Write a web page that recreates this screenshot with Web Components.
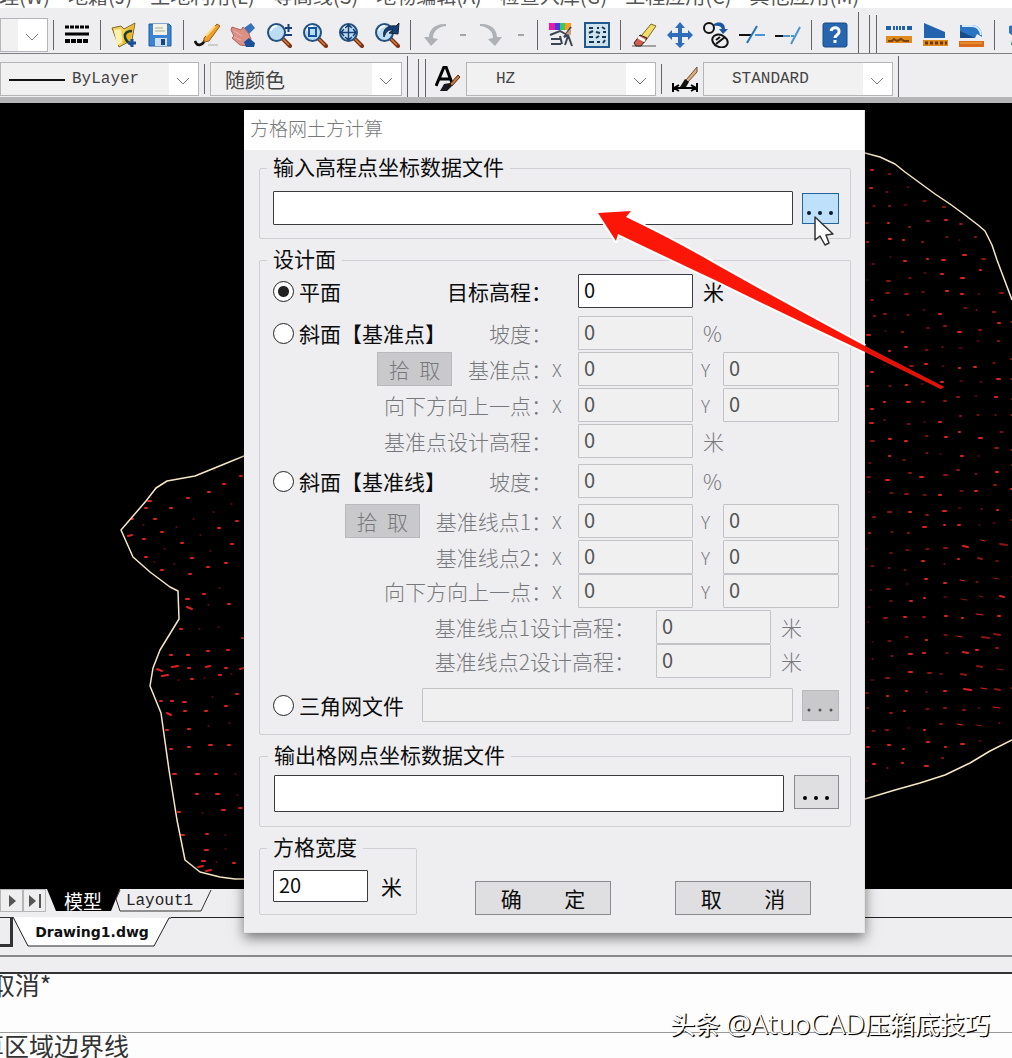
<!DOCTYPE html>
<html lang="zh-CN">
<head>
<meta charset="utf-8">
<title>方格网土方计算</title>
<style>
html,body{margin:0;background:#fdfdfe}
body{font-family:"Noto Sans CJK SC",sans-serif;font-size:20px;color:#111;overflow:hidden}
</style>
</head>
<body>
<cad-app></cad-app>
<script>
const define = (name, html, setup) => customElements.define(name, class extends HTMLElement {
  constructor(){
    super();
    const t = document.createElement('template');
    t.innerHTML = typeof html === 'function' ? html(this) : html;
    this.attachShadow({mode:'open'}).append(t.content.cloneNode(true));
    if (setup) setup(this, this.shadowRoot);
  }
});

const glass = (inner) => `<path d="M16 16l8 8" stroke="#7a3413" stroke-width="4" stroke-linecap="round"/><path d="M16 16l7 7" stroke="#d9783c" stroke-width="1.500"/><circle cx="10.500" cy="10.500" r="8.500" fill="#bcdcf3" stroke="#23507f" stroke-width="2"/><path d="M5 9a6 6 0 0 1 6-5" stroke="#fff" stroke-width="2" fill="none"/>${inner}`;
const ICONS = {
  lines:['线宽','<path d="M1 5h24" stroke="#000" stroke-width="3" stroke-dasharray="4 1"/><path d="M1 12h24" stroke="#000" stroke-width="3"/><path d="M1 19h24" stroke="#000" stroke-width="4" stroke-dasharray="5 1"/>'],
  open:['打开','<path d="M1 6l9-2 3 3 11-6-3 17-13 7z" fill="#f2cf5e" stroke="#7b6a28"/><path d="M3 8l7-1 1 13-5 4z" fill="#fff2b0"/><path d="M14 9l9-7-3 16-8 4z" fill="#eeb728"/><path d="M21 9c-10 0-9 9 0 14" fill="none" stroke="#1b3c34" stroke-width="2.500"/><path d="M17 21h8m-4-4v8" stroke="#1a4f98" stroke-width="3"/>'],
  save:['保存','<path d="M2 2h20l2 2v20H2z" fill="#3d83d4" stroke="#1c5ca8"/><path d="M6 2h14v11H6z" fill="#f5f2e4"/><path d="M8 6h8M8 9h10" stroke="#a9ad9d"/><path d="M8 16h12v8H8z" fill="#cddff0"/><path d="M14 17h4v6h-4z" fill="#15477f"/>'],
  brush:['绘制','<path d="M1 19c2 6 8 5 11-3" fill="none" stroke="#111" stroke-width="2.500"/><path d="M10 16L23 2l3 2-11 15-5 1z" fill="#eca02b" stroke="#9a5d17"/><path d="M12 14l9-10" stroke="#ffdc77" stroke-width="2"/><path d="M14 23h10" stroke="#aaa"/>'],
  hand:['平移','<path d="M14 6l7-5 4 5-6 6z" fill="#3773bd"/><path d="M1 8l1-3 9 3 2-3 6 7 2 5-3 7-8-1-8-7 2-2z" fill="#dc8f84" stroke="#b3645e"/><path d="M4 9l8 5M4 15l7 3" stroke="#f0b5ab"/><path d="M14 20l5-4 6 5-1 4h-8z" fill="#1c4f9b"/>'],
  zoompm:['缩放',glass('<path d="M19 6h7m-3.500-4v8M19 13h7" stroke="#173e79" stroke-width="2"/>')],
  zoomwin:['窗口缩放',glass('<rect x="7" y="6" width="7" height="8" fill="none" stroke="#15539f" stroke-width="2"/>')],
  zoomall:['全部缩放',glass('<path d="M3 10.500h15M10.500 3v15M7 6l3.500-3L14 6M7 15l3.500 3 3.500-3M6 7l-3 3.500L6 14M15 7l3 3.500-3 3.500" fill="none" stroke="#153f76" stroke-width="1.500"/>')],
  zoomprev:['上次缩放',glass('<path d="M10 15c-2-8 4-12 12-11l3-3-1 11-9-1 4-3c-5-1-7 2-9 7z" fill="#173f79" stroke="#123"/>')],
  undo:['放弃','<path d="M25 2C14 1 8 8 8 15H3l7 9 7-7-5-1c0-6 4-11 13-12z" fill="#aeb1b6"/>'],
  redo:['重做','<path d="M1 2c11-1 17 6 17 13h5l-7 9-7-7 5-1C14 10 10 5 1 4z" fill="#aeb1b6"/>'],
  palette:['特性','<path d="M1 1h6v7H1z" fill="#e71ba8"/><path d="M7 1h5v7H7z" fill="#4b39df"/><path d="M12 1h5v7h-5z" fill="#31ca63"/><path d="M17 1h6v7h-6z" fill="#fb9d21"/><path d="M2 13l10-4 9 5M3 17h9M3 22h10M12 14l2 8M23 5l-7 10 4-2 4 11M20 14l-3 9" fill="none" stroke="#3d4553" stroke-width="2"/><path d="M18 12l5-6v7z" fill="#c89b82"/>'],
  grid:['设计中心','<rect x="1" y="1" width="24" height="24" fill="#cfe3ef" stroke="#1e588d" stroke-width="2"/><path d="M5 6h4M13 6h2M18 5l3 2M5 11l4-2M12 10l4 1M19 10h3M5 15h4M12 16l3-2M18 15h4M5 20h5M13 20h3M19 21l2-3" stroke="#16344e" stroke-width="2"/>'],
  erase:['删除','<path d="M1 24h24" stroke="#555"/><path d="M6 19L20 2l5 2L13 21z" fill="#f4dc68" stroke="#776431"/><path d="M3 21l6-8 7 3-6 8H5z" fill="#d65b4b" stroke="#222"/><path d="M7 15l7 4" stroke="#fff" stroke-width="3"/>'],
  move:['移动','<path d="M13 0l5 6h-3v5h6V8l5 5-5 5v-3h-6v6h3l-5 5-5-5h3v-6H5v3l-5-5 5-5v3h6V6H8z" fill="#2e6dbb"/>'],
  rotate:['旋转','<circle cx="6" cy="6" r="5" fill="none" stroke="#111" stroke-width="2"/><path d="M11 2c6-3 11-1 11 5h3l-5 5-4-5h3c-1-3-4-4-8-3z" fill="#1c56a0"/><ellipse cx="17" cy="19" rx="8" ry="6" transform="rotate(25 17 19)" fill="none" stroke="#111" stroke-width="2"/><path d="M13 22l9-7M13 18l4-3" stroke="#111" stroke-width="2"/>'],
  trim:['修剪','<path d="M0 13h12" stroke="#111" stroke-width="2"/><path d="M16 13h10" stroke="#4a94d2" stroke-width="2"/><path d="M18 4L8 21" stroke="#2574bb" stroke-width="2"/>'],
  extend:['延伸','<path d="M0 14h8" stroke="#111" stroke-width="2"/><path d="M8 14h11" stroke="#4a94d2" stroke-width="2" stroke-dasharray="7 1"/><path d="M25 5l-9 17" stroke="#4a94d2" stroke-width="2"/>'],
  help:['帮助','<rect x="1" y="1" width="24" height="24" rx="2" fill="#2765af" stroke="#174a87"/><path d="M9 9c1-5 9-4 8 1 0 3-4 3-4 6" fill="none" stroke="#fff" stroke-width="3"/><path d="M13 18v3" stroke="#fff" stroke-width="3"/>'],
  ruler:['断面','<path d="M0 6h5M7 6h2M10 6h2M13 6h2M16 6h3M21 6h5" stroke="#1f5fa6" stroke-width="4"/><rect x="0" y="14" width="26" height="7" fill="#e08a1e"/><path d="M2 19h4l2-2 3 2 4-2 3 2h5" stroke="#7a450c" fill="none" stroke-width="2"/>'],
  slope:['坡面','<path d="M2 1l21 9v6H2z" fill="#2163ae"/><rect x="1" y="18" width="25" height="6" fill="#e08a1e"/><path d="M3 21h22" stroke="#6b370a" stroke-width="3" stroke-dasharray="3 2"/>'],
  solid:['土方','<path d="M2 3h12c7 0 10 5 10 12l-5-3-2 4H2z" fill="#2b74c3"/><path d="M4 4h10c5 0 8 3 9 9" stroke="#d5ebff" stroke-width="2" fill="none"/><path d="M2 9l15 7H2z" fill="#164b8c"/><rect x="1" y="19" width="25" height="6" fill="#d9691c"/><path d="M2 21h22" stroke="#f0ad3f"/>'],
  text:['文字样式','<path d="M1 20L9 1h2l6 16M5 13h10" fill="none" stroke="#000" stroke-width="3"/><path d="M15 18l8-9 2 2-8 9z" fill="#c8793d" stroke="#5d2b11"/><path d="M5 25l4-7 6-1 2 3-5 5z" fill="#15191d"/>'],
  dim:['标注样式','<path d="M1 17v9M25 17v9M2 22h22M7 19l-5 3 5 3M19 19l5 3-5 3" fill="none" stroke="#000" stroke-width="2"/><path d="M25 1L14 14l2 2L25 6z" fill="#dcaf82" stroke="#75502e"/><path d="M8 21l5-8 4 3-3 5z" fill="#111"/>'],
  more:['更多','<path d="M4 4l14-2v9L8 14l-4-3z" fill="#2b74c3"/><path d="M8 13l12 9-14 1z" fill="#18775a"/>']
};

define('tool-button', el => {
  const [label, art] = ICONS[el.getAttribute('icon')];
  return `<style>:host{display:flex;flex:none;width:36px;justify-content:center}
button{display:flex;border:0;background:none;padding:0}svg{display:block;width:26px;height:26px}</style>
<button type="button" aria-label="${label}" title="${label}"><svg viewBox="0 0 26 26" fill="none">${art}</svg></button>`;
});

define('tool-rule', `<style>:host{display:flex;flex:none;justify-content:center;width:11px;height:30px}
i{width:1px;background:#63656a}
:host([double]) i+i{margin-left:6px}i+i{display:none}:host([double]) i+i{display:block}
:host([double]){width:17px;height:38px;align-self:flex-end}
:host([tall]){height:41px;align-self:flex-end}</style><i></i><i></i>`);

define('combo-box', el => `<style>
:host{display:grid;flex:none;height:34px;box-sizing:border-box;border:1px solid #b4b5b8;background:#f1f1f2}
select,svg{grid-area:1/1}
select{appearance:none;width:100%;height:100%;border:0;margin:0;padding:0 30px 0 var(--inset,14px);background:none;color:#444;font:inherit}
:host([line]) select{background:linear-gradient(#111,#111) 8px 16px/56px 2px no-repeat}
svg{justify-self:end;width:29px;height:100%;background:#fff;pointer-events:none}
</style><select aria-label="${el.getAttribute('label')}"><option>${el.getAttribute('value')||''}</option></select>
<svg viewBox="0 0 29 32"><path d="M8 15l6 6 6-6" fill="none" stroke="#77797d" stroke-width="1"/></svg>`);

define('menu-bar', `<style>
:host{display:flex;height:8px;overflow:hidden;align-items:flex-end;background:#fff}
nav{display:flex;gap:18px;margin-left:-61px;white-space:nowrap}
a{color:#555;text-decoration:none;font-size:20px;line-height:24px}</style>
<nav>${['处理(W)','地籍(J)','土地利用(L)','等高线(S)','地物编辑(A)','检查入库(G)','工程应用(C)','其他应用(M)'].map((t,i)=>`<a href="#">${i?t:'绘图'+t}</a>`).join('')}</nav>`);

const icon = s => s.split(' ').map(n => n==='|' ? '<tool-rule></tool-rule>' : n==='-' ? '<span class="drop"></span>' : `<tool-button icon="${n}"></tool-button>`).join('');
define('tool-bars', `<style>
:host{display:block;border-bottom:6px solid #b5b5b7;background:#eeeef0;overflow:hidden}
.bar{display:flex;align-items:center;box-sizing:border-box;height:46px;padding-top:8px;border-bottom:1px solid #7d7f83}
.bar.two{height:43px;padding-top:7px;border:0}
.first{width:48px}
.drop{flex:none;width:22px;display:flex;justify-content:center}
.drop::before{content:"";width:6px;height:2px;background:#a3a5a9}
.mono{font-family:"Liberation Mono",monospace;font-size:16px}
.plain{font-size:20px}
.color{width:192px}.style{width:190px}.type{width:199px}
</style>
<div class="bar"><combo-box class="first" label="图层"></combo-box>${icon('| lines | open save | brush hand zoompm zoomwin zoomall zoomprev | undo - redo - | palette grid | erase move rotate trim extend | help')}<tool-rule tall></tool-rule><tool-rule double></tool-rule>${icon('ruler slope solid | more')}</div>
<div class="bar two"><combo-box class="type mono" line style="--inset:71px" label="线型" value="ByLayer"></combo-box><tool-rule></tool-rule><combo-box class="color plain" label="颜色" value="随颜色"></combo-box><tool-rule tall></tool-rule><tool-rule double></tool-rule><tool-button icon="text"></tool-button><combo-box class="style mono" style="--inset:29px" label="文字样式" value="HZ"></combo-box><tool-rule></tool-rule><tool-button icon="dim"></tool-button><combo-box class="style mono" style="--inset:28px" label="标注样式" value="STANDARD"></combo-box><tool-rule tall></tool-rule></div>`);

define('survey-canvas', `<style>:host{display:block;height:786px;background:#000}svg{display:block;width:100%;height:100%}</style>
<svg viewBox="0 103 1012 786" preserveAspectRatio="xMidYMid slice" role="img" aria-label="高程点图">
<defs><clipPath id="east"><path d="M865 158L893 168 948 206 982 234 990 256 1012 305V742L990 744 943 769 865 792z"/></clipPath></defs>
<g id="pts" stroke="#ee211d" stroke-linecap="round" fill="none"></g>
<g fill="none" stroke="#f7e8c4" stroke-width="1.500" stroke-linejoin="round">
<path d="M244 456L222 465 195 476 167 481 156 488 146 501 121 530 133 557 150 572 170 587 178 591 179 619 160 650 153 668 150 686 161 713 169 770 177 820 185 860 200 872 220 877 235 879 244 879"/>
<path d="M865 153L880 157 895 164 905 172 920 183 935 194 950 204 965 215 978 225 985 231 992 245 997 260 1012 300M865 799L895 790 920 783 945 775 970 763 990 751 1012 740"/></g></svg>`,
(el, root) => {
  const west = [[214,470,1],[223,484,2],[208,492,2],[187,498,2],[170,508,2],[148,501,3],[145,508,2],[154,519,2],[143,525,1],[131,519,2],[128,536,4],[143,539,2],[161,532,2],[176,527,1],[193,519,1],[213,512,1],[231,504,1],[240,476,2],[236,521,2],[218,528,2],[200,535,1],[181,543,2],[164,549,1],[145,557,2],[154,562,1],[161,570,2],[174,564,1],[191,558,2],[210,551,1],[231,544,2],[225,563,2],[207,567,2],[189,574,2],[219,588,1],[203,594,2],[186,599,3],[208,605,1],[228,604,2],[187,607,5],[180,629,2],[199,629,1],[218,627,1],[242,638,3],[170,655,2],[187,655,2],[207,651,2],[227,650,2],[157,669,5],[172,667,6],[188,668,2],[206,667,4],[225,668,2],[240,669,4],[162,676,6],[178,680,1],[191,679,2],[204,678,1],[219,675,2],[231,674,1],[236,694,2],[212,697,1],[171,701,2],[183,702,3],[225,706,2],[160,701,2],[167,713,4],[184,711,2],[205,711,2],[229,723,1],[208,726,1],[188,729,2],[166,730,2],[188,747,2],[209,745,3],[228,745,2],[170,749,2],[173,774,3],[196,774,3],[215,774,2],[235,774,1],[196,794,2],[216,794,3],[237,795,1],[222,810,3],[202,813,1],[178,812,2],[239,808,3],[181,835,3],[206,834,2],[225,835,1],[205,850,3],[225,849,1],[202,861,3],[216,862,1],[233,863,2],[198,867,5],[206,871,5]];
  const out = west.map(([x,y,n])=>`<path d="M${x} ${y}l${n} ${n>3?(x%2?2:-1):0}" stroke-width="${n>1?2:1}" opacity="${n>1?0.95:0.7}"/>`).join('');
  let seed = 7; const rnd = () => (seed = (seed*1103515245+12345) % 2147483648) / 2147483648;
  let east = '';
  for (let y=168; y<800; y+=18) for (let x=866; x<1016; x+=18) {
    const busy = y>540 && y<740 && x>945;
    const px = Math.round(x + rnd()*8 - (y%3)*3), py = Math.round(y + rnd()*8 - (x-866)/16), n = Math.round(1 + rnd()*(busy ? 7 : 2));
    east += `<path d="M${px} ${py}l${n} ${n>3?1:0}" stroke-width="${rnd()>.4?2:1}" opacity="${rnd()>.4?.95:.6}"/>`;
  }
  root.querySelector('#pts').innerHTML = out + `<g clip-path="url(#east)">${east}</g>`;
});

define('group-box', el => `<style>
:host{display:block}
fieldset{margin:0;min-width:0;border:1px solid #cfd0d3;border-radius:2px;padding:var(--pad,11px 11px 13px 13px)}
legend{margin-left:-6px;padding:0 6px 4px;line-height:20px;font-size:21px}
</style><fieldset><legend>${el.getAttribute('caption')}</legend><slot></slot></fieldset>`);

define('field-row', `<style>
:host{display:grid;grid-template-columns:1fr 115px 30px 116px;align-items:center;height:34px;margin-top:2px}
:host([space]){margin-top:6px}:host([loose]){margin-top:8px}:host([flush]){margin-top:0}
:host([wide]){grid-template-columns:1fr 115px 68px}
div{display:flex;align-items:center;white-space:nowrap}
slot[name=label]{display:block;margin-left:auto}
</style><div><slot name="lead"></slot><slot name="label"></slot></div><slot></slot>`);

let uid = 0;
const row = ({attr='', radio='', checked='', pick='', text, axis='', unit='', y='', on=false}) => {
  const id = 'f' + (++uid), dis = on ? '' : 'disabled', cls = on ? '' : 'dim';
  return `<field-row ${attr}>
${radio ? `<span slot="lead" class="choice"><input type="radio" name="surface" id="${id}r" ${checked}><label for="${id}r">${radio}</label></span>` : ''}
<span slot="label" class="caption ${cls}">${pick ? `<button type="button" class="pick" disabled>拾  取</button>` : ''}<label for="${id}">${text}</label><span class="axis">${axis}</span></span>
<input type="text" id="${id}" value="0" ${dis}>
${y ? `<label class="unit dim" for="${id}y">Y</label><input type="text" id="${id}y" value="0" disabled>` : `<span class="unit ${cls}">${unit}</span>`}
</field-row>`;
};

define('grid-dialog', `<style>
:host{display:block;box-sizing:border-box;background:#eeeef0;border:1px solid #e4e4e6;border-width:0 1px 1px 0;box-shadow:0 5px 12px rgba(0,0,0,.5);font-size:21px;color:#0c0c0c}
h1{margin:0;height:40px;line-height:36px;padding-left:6px;background:#fff;color:#77787a;font-size:19px;font-weight:300}
form{display:flex;flex-direction:column;gap:9px;padding:6px 13px 17px 15px}
input,button{font:inherit;color:inherit;box-sizing:border-box;margin:0}
input[type=text]{width:100%;min-width:0;height:34px;padding:0 5px 3px;border:1px solid #3b3b3e;border-radius:1px;background:#fff;font-size:20px}
input[type=text]:disabled{border-color:#c2c3c7;background:#f0f0f1;color:#555}
.choice,.pair{display:flex;align-items:center}
.choice label{line-height:30px}
input[type=radio]{appearance:none;flex:none;width:21px;height:21px;margin-right:5px;border:1px solid #222;border-radius:50%;background:#fff}
input[type=radio]:checked{background:radial-gradient(circle,#222 0 5px,#fff 6px)}
.caption{display:flex;align-items:center}
.dim{color:#77787b;font-weight:300}
.axis{width:26px;font-size:18px}
[wide] .axis{width:21px}
.unit{padding-left:10px;line-height:30px}
label.unit{padding-left:8px;font-size:18px}
button{padding:0;border:1px solid #8a8b8e;background:#dfdfe1;white-space:pre;line-height:30px}
button:disabled{border-color:#b9babd;background:#c9c9cb;color:#77787b}
.pick{width:75px;height:34px;margin-right:16px;font-weight:300}
.pair{gap:9px}
.pair input[type=text]{flex:1}
.browse{flex:none;width:37px;height:31px;display:flex;align-items:flex-end;justify-content:center;padding-bottom:8px}
.browse svg{display:block;width:27px;height:4px}
.hot{background:#bfe0fa;border-color:#22659c}
.out{align-items:flex-start;gap:10px}
.out input[type=text]{height:37px}
.out .browse{width:45px;height:34px}
.tri{margin-top:10px}
.tri .choice{margin-right:9px}
.foot{display:flex;align-items:flex-end}
.foot group-box{width:158px}
.width input[type=text]{flex:none;width:95px;height:32px}
.width{gap:13px}
.acts{display:flex;gap:64px;margin-left:auto;padding-right:40px}
.acts button{width:136px;height:34px}
.over{position:absolute;left:0;top:0;width:720px;height:300px;overflow:visible;pointer-events:none}
</style>
<h1>方格网土方计算</h1>
<form>
<group-box caption="输入高程点坐标数据文件"><div class="pair"><input type="text" aria-label="输入高程点坐标数据文件"><button type="button" class="browse hot" aria-label="浏览"><svg viewBox="0 0 27 4"><path d="M2 2h0M13 2h0M24 2h0" stroke="#0a1a2a" stroke-width="4" stroke-linecap="round"/></svg></button></div></group-box>
<group-box caption="设计面" style="--pad:0 11px 12px 13px">
${row({on:true, radio:'平面', checked:'checked', text:'目标高程：', unit:'米'})}
${row({attr:'loose', radio:'斜面【基准点】', text:'坡度：', unit:'%'})}
${row({pick:1, text:'基准点：', axis:'X', y:1})}
${row({text:'向下方向上一点：', axis:'X', y:1})}
${row({text:'基准点设计高程：', unit:'米'})}
${row({attr:'space', radio:'斜面【基准线】', text:'坡度：', unit:'%'})}
${row({attr:'space', pick:1, text:'基准线点1：', axis:'X', y:1})}
${row({text:'基准线点2：', axis:'X', y:1})}
${row({attr:'flush', text:'向下方向上一点：', axis:'X', y:1})}
${row({attr:'wide', text:'基准线点1设计高程：', unit:'米'})}
${row({attr:'wide flush', text:'基准线点2设计高程：', unit:'米'})}
<div class="pair tri"><span class="choice"><input type="radio" name="surface" id="tri"><label for="tri">三角网文件</label></span><input type="text" aria-label="三角网文件" disabled><button type="button" class="browse" disabled aria-label="浏览"><svg viewBox="0 0 27 4"><path d="M2 2h0M13 2h0M24 2h0" stroke="#555" stroke-width="3" stroke-linecap="round"/></svg></button></div>
</group-box>
<group-box caption="输出格网点坐标数据文件" style="--pad:7px 11px 14px 14px"><div class="pair out"><input type="text" aria-label="输出格网点坐标数据文件"><button type="button" class="browse" aria-label="浏览"><svg viewBox="0 0 27 4"><path d="M2 2h0M13 2h0M24 2h0" stroke="#000" stroke-width="4" stroke-linecap="round"/></svg></button></div></group-box>
<div class="foot"><group-box caption="方格宽度" style="--pad:10px 11px 12px 13px"><div class="pair width"><input type="text" id="w" value="20"><label for="w">米</label></div></group-box>
<div class="acts"><button type="submit">确         定</button><button type="button">取         消</button></div></div>
</form>
<svg class="over" viewBox="244 110 720 300" aria-hidden="true">
<path d="M865 346Q790 306 717 265 676 241 626 217L631 211 598 213 616 241 618 234Q668 258 717 281 790 317 865 352" fill="none" stroke="#fff" stroke-width="4" stroke-linejoin="round"/>
<path d="M598 213L631 211 626 217Q676 241 717 265 790 306 865 346L944 387 941 389 865 352Q790 317 717 281 668 258 618 234L616 241z" fill="#fb1607"/>
<path d="M865 347L944 387 941 389 865 351z" fill="#e01208"/>
<path d="M815 217v23l5-4 5 9 4-2-3-8 7-1z" fill="#fff" stroke="#333" stroke-width="1.500" stroke-linejoin="round"/></svg>`);

define('status-tabs', `<style>
:host{display:block;background:#eeeef0}
.r{display:flex;height:23px;align-items:stretch}
button{position:relative;border:0;margin:0;padding:0;background:none;font:inherit;color:#222}
.nav{width:23px;border:1px solid #b5b6b9;display:flex;align-items:center;justify-content:center;background:#eee}
.nav svg{width:14px;height:14px}
.tab{isolation:isolate}
.tab>svg{position:absolute;inset:0;width:100%;height:100%;z-index:-1}
.model{width:74px;color:#fff;font-size:19px;line-height:20px}
.lay{width:97px;margin-left:-5px;font:16px/24px "Liberation Mono",monospace;padding-right:8px}
.d{display:flex;height:38px;padding-top:5px;border-bottom:2px solid #88898b}
.rest{flex:1;border-top:1px solid #222}
.scroll{width:13px;height:30px;border:solid #333;border-width:1px 3px 3px 0;box-sizing:border-box}
.dwg{width:158px;height:30px;font:bold 14px/30px "DejaVu Sans",sans-serif;color:#111}
.gap{height:15px;border-bottom:2px solid #333}
</style>
<div class="r"><button class="nav" aria-label="下一个"><svg viewBox="0 0 14 14"><path d="M4 1l7 6-7 6z" fill="#555"/></svg></button><button class="nav" aria-label="最后一个"><svg viewBox="0 0 14 14"><path d="M1 1l7 6-7 6z" fill="#555"/><path d="M12 0v14" stroke="#555" stroke-width="2"/></svg></button>
<button class="tab model"><svg viewBox="0 0 74 23" preserveAspectRatio="none"><path d="M1 0h73l-9 22H10z" fill="#000"/></svg>模型</button>
<button class="tab lay"><svg viewBox="0 0 97 23" preserveAspectRatio="none"><path d="M5 1L1 10l4 12h81L96 1" fill="#eeeef0" stroke="#333"/></svg>Layout1</button></div>
<div class="d"><button class="scroll" aria-label="滚动"></button><button class="tab dwg"><svg viewBox="0 0 158 30" preserveAspectRatio="none"><path d="M0 0l15 29h126L156 1h2" fill="#fff" stroke="#222"/></svg>Drawing1.dwg</button><span class="rest"></span></div>
<div class="gap"></div>`);

define('command-area', `<style>
:host{display:block;position:relative;background:#fdfdfe;color:#333;font-size:25px;white-space:nowrap;overflow:hidden}
p{margin:0;line-height:20px}
.log{height:58px;border-bottom:1px solid #999;text-indent:-22px}
.cmd{height:27px;line-height:24px;text-indent:-21px}
.mark{position:absolute;right:22px;bottom:19px;line-height:36px;color:#fff;text-shadow:1px 1px 1px #000,1px 1px 0 #111}
.mark b{font:300 28px/36px "Noto Sans",sans-serif}
</style><p class="log">*取消*</p><p class="cmd">算区域边界线</p><span class="mark">头条 <b>@AtuoCAD</b>压箱底技巧</span>`);

define('cad-app', `<style>
:host{display:block}
main{position:relative}
grid-dialog{position:absolute;z-index:2;left:244px;right:147px;top:7px}
</style><menu-bar></menu-bar><tool-bars></tool-bars><main><survey-canvas></survey-canvas><status-tabs></status-tabs><grid-dialog></grid-dialog></main><command-area></command-area>`);
</script>
</body>
</html>
